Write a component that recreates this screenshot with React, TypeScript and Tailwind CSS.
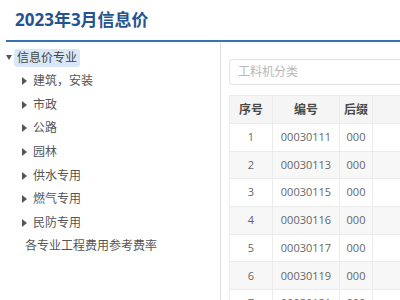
import React from 'react'

const App = () => {
    interface treeItemProps {
        label: string
    }
    interface rowProps {
        no: number
        code: string
        suffix: string
    }
    const children: treeItemProps[] = [
        { label: '建筑，安装' },
        { label: '市政' },
        { label: '公路' },
        { label: '园林' },
        { label: '供水专用' },
        { label: '燃气专用' },
        { label: '民防专用' },
    ]
    const rows: rowProps[] = [
        { no: 1, code: '00030111', suffix: '000' },
        { no: 2, code: '00030113', suffix: '000' },
        { no: 3, code: '00030115', suffix: '000' },
        { no: 4, code: '00030116', suffix: '000' },
        { no: 5, code: '00030117', suffix: '000' },
        { no: 6, code: '00030119', suffix: '000' },
        { no: 7, code: '00030121', suffix: '000' },
    ]

    return (
        <div className="w-[400px] h-[300px] overflow-hidden bg-white font-['Open_Sans','Noto_Sans_CJK_SC',sans-serif]">
            {/* title */}
            <div className="h-[40px] pl-[15px] pt-[9px] text-[17px] font-bold text-[#24538f] leading-[22px]">
                2023年3月信息价
            </div>
            <div className="ml-[6px] h-[2px] bg-[#3a72ad]"></div>

            <div className="flex h-[258px]">
                {/* tree */}
                <div className="w-[215px] ml-[6px] pt-[4px] border-r border-[#dfe1ea] shrink-0 text-[12px] text-[#555]">
                    <div className="flex items-center h-[23.5px]">
                        <span className="w-0 h-0 border-l-[3px] border-r-[3px] border-t-[5px] border-l-transparent border-r-transparent border-t-[#555]"></span>
                        <span className="ml-[2px] px-[3px] h-[18px] leading-[18px] rounded-[3px] bg-[#d9e8f8] text-[#444]">
                            信息价专业
                        </span>
                    </div>
                    {children.map((item: treeItemProps) => {
                        return (
                            <div className="flex items-center h-[23.6px] pl-[16px]" key={item.label}>
                                <span className="w-0 h-0 border-t-[4px] border-b-[4px] border-l-[5px] border-t-transparent border-b-transparent border-l-[#555]"></span>
                                <span className="ml-[6px]">{item.label}</span>
                            </div>
                        )
                    })}
                    <div className="flex items-center h-[23.6px] pl-[19px]">各专业工程费用参考费率</div>
                </div>

                {/* right side */}
                <div className="flex-1 pl-[8px] pt-[17px]">
                    <div className="h-[26px] border border-[#e3e3e3] rounded-[4px] rounded-r-none border-r-0 pl-[8px] text-[12px] leading-[24px] text-[#b8b8b8]">
                        工料机分类
                    </div>
                    <div className="mt-[10px] border-l border-t border-[#ebebeb] text-[11px] text-[#666]">
                        <div className="flex h-[28px] bg-[#f5f5f5] border-b border-[#ebebeb] font-bold text-[#4a4a4a] text-[12px]">
                            <div className="w-[43px] flex items-center justify-center border-r border-[#ebebeb]">序号</div>
                            <div className="w-[67px] flex items-center justify-center border-r border-[#ebebeb]">编号</div>
                            <div className="w-[33px] flex items-center justify-center border-r border-[#ebebeb]">后缀</div>
                            <div className="flex-1"></div>
                        </div>
                        {rows.map((row: rowProps) => {
                            return (
                                <div
                                    key={row.no}
                                    className={
                                        row.no % 2 === 0
                                            ? 'flex h-[27.7px] bg-[#f7f7f7] border-b border-[#ebebeb]'
                                            : 'flex h-[27.7px] bg-white border-b border-[#ebebeb]'
                                    }
                                >
                                    <div className="w-[43px] flex items-center justify-center border-r border-[#ebebeb]">{row.no}</div>
                                    <div className="w-[67px] flex items-center justify-center border-r border-[#ebebeb]">{row.code}</div>
                                    <div className="w-[33px] flex items-center justify-center border-r border-[#ebebeb]">{row.suffix}</div>
                                    <div className="flex-1"></div>
                                </div>
                            )
                        })}
                    </div>
                </div>
            </div>
        </div>
    )
}

export default App
